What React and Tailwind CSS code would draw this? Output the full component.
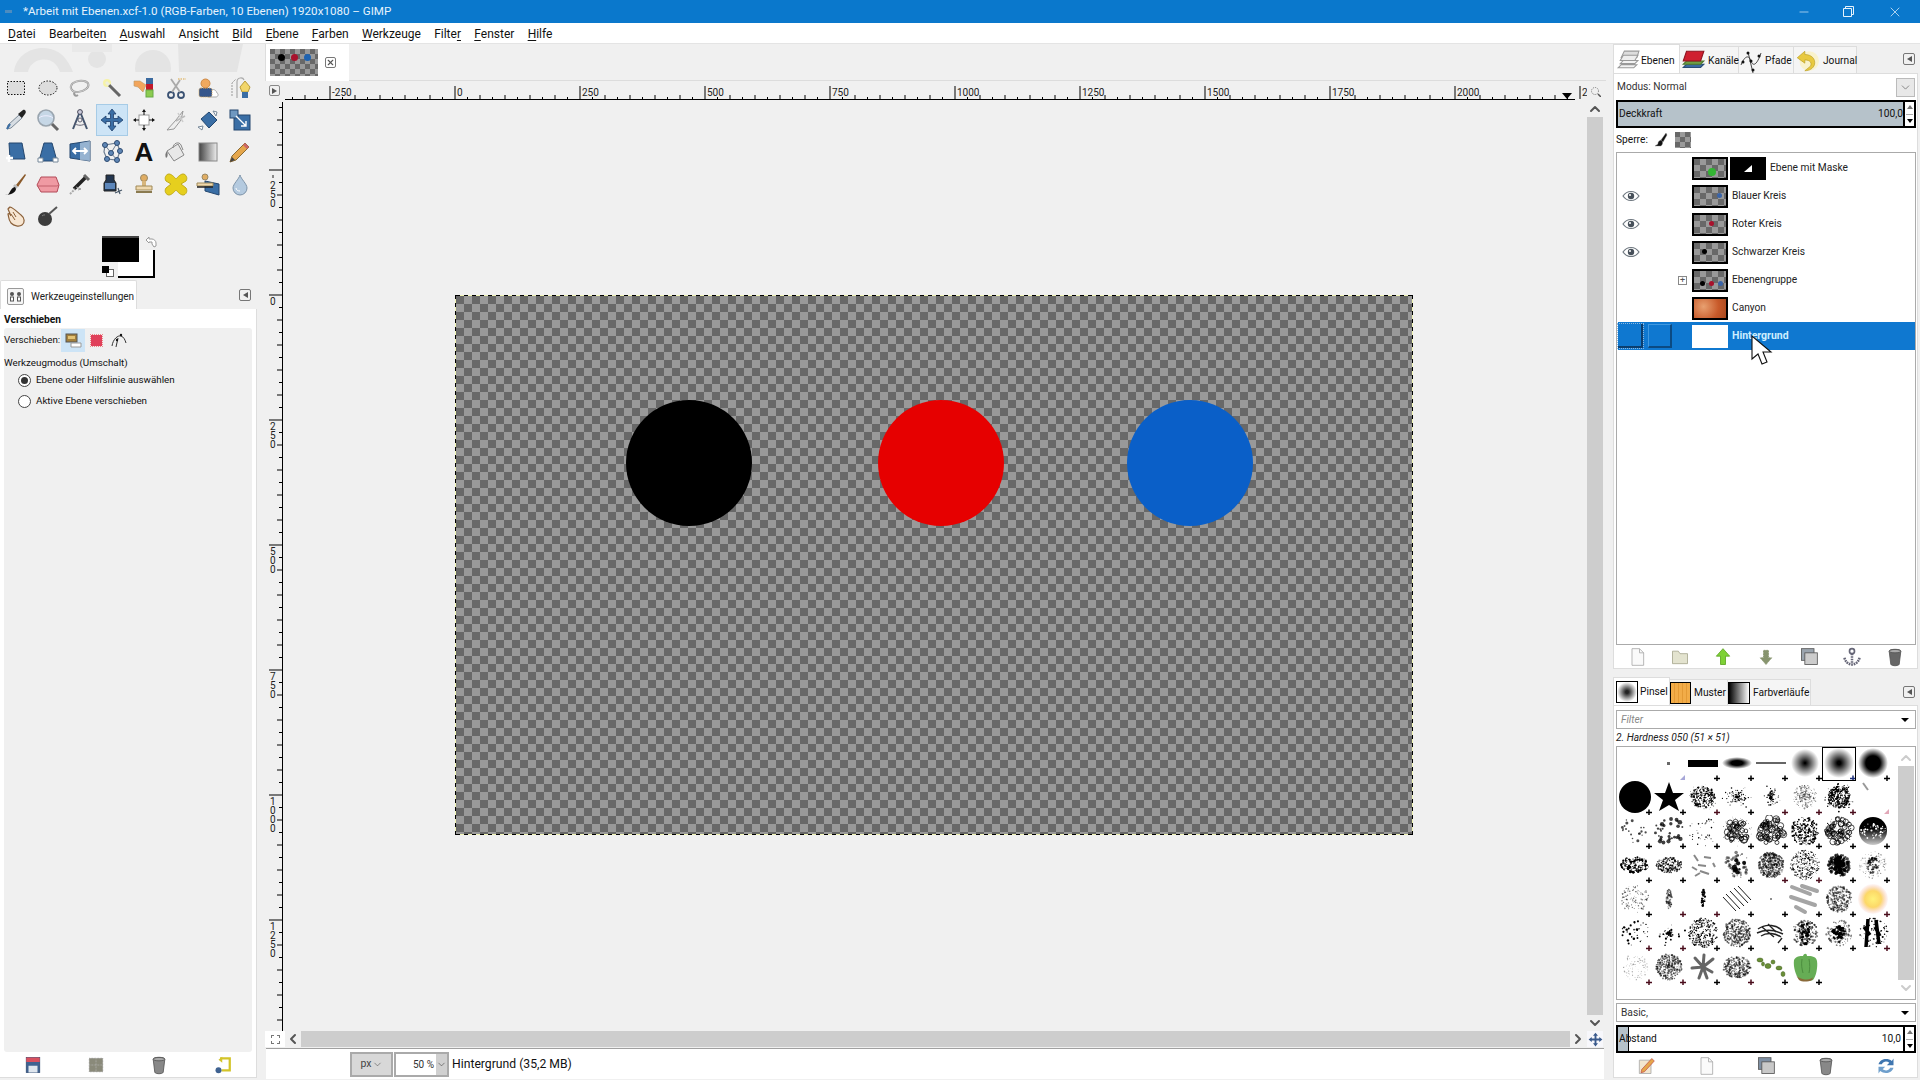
import { Minus, X, ChevronDown, ChevronUp, ChevronLeft, ChevronRight } from "lucide-react";

const menus = [
  ["", "D", "atei"],
  ["Bearbeite", "n", ""],
  ["", "A", "uswahl"],
  ["An", "s", "icht"],
  ["", "B", "ild"],
  ["", "E", "bene"],
  ["", "F", "arben"],
  ["", "W", "erkzeuge"],
  ["Filte", "r", ""],
  ["", "F", "enster"],
  ["", "H", "ilfe"],
];

const checker = "bg-[conic-gradient(#999_25%,#686868_0_50%,#999_0_75%,#686868_0)]";

// tool icons, all in a 24 box
const tools = [
  <><rect x="3.5" y="5.5" width="17" height="13" fill="#ddd" stroke="#111" strokeDasharray="1.5 1.5" /></>,
  <><ellipse cx="12" cy="12" rx="9" ry="7" fill="#ddd" stroke="#111" strokeDasharray="1.5 1.5" /></>,
  <><path d="M3 10c1-4 8-6 13-5s6 5 2 8-11 4-13 2-3-3-2-5zM7 15c-2 3 0 6 3 4" fill="none" stroke="#999" strokeWidth="2" /><path d="M3 10c1-4 8-6 13-5s6 5 2 8-11 4-13 2-3-3-2-5z" fill="none" stroke="#eee" strokeWidth=".6" /></>,
  <><circle cx="7" cy="7" r="4" fill="#f6f3a8" /><path d="M9 9l11 11" stroke="#666" strokeWidth="3" /><path d="M6 6l3 3" stroke="#eed" strokeWidth="3" /></>,
  <><rect x="14" y="2" width="7" height="6" fill="#3b6aa0" /><rect x="14" y="8" width="7" height="6" fill="#c2182a" /><rect x="14" y="14" width="7" height="7" fill="#8ccb50" stroke="#6a4" /><path d="M2 5h6l6 4-3 7-5-5-4-1z" fill="#f2a55c" stroke="#b96" strokeWidth=".6" /></>,
  <><circle cx="7" cy="19" r="3" fill="none" stroke="#3b5273" strokeWidth="1.8" /><circle cx="17" cy="19" r="3" fill="none" stroke="#3b5273" strokeWidth="1.8" /><path d="M8 16L16 4M16 16L7 3" stroke="#aaa" strokeWidth="1.8" /><path d="M14 3h8" stroke="#d9a441" strokeDasharray="1.5 1" /></>,
  <><path d="M13 16c2-4 7-3 8 1 2 1 1 4-1 4H12z" fill="#fff" stroke="#aaa" /><rect x="3" y="12" width="13" height="9" rx="2" fill="#35568c" stroke="#da5" strokeDasharray="1 1" /><circle cx="9.5" cy="7.5" r="4.5" fill="#f0a95e" stroke="#c84" /></>,
  <><path d="M9 22V6c0-5 6-5 7-2" fill="none" stroke="#aaa" strokeWidth="1.2" /><path d="M4 20V7l4-4" fill="none" stroke="#999" strokeWidth="1" strokeDasharray="2 1" /><path d="M14 16l-2-5 5-6 5 6-2 5z" fill="#f2d66a" stroke="#b99b3a" /><rect x="14" y="16" width="6" height="6" fill="#3a6ea5" /></>,
  <><path d="M3 21l1-4 11-10 3 3-11 10z" fill="#d7dde3" stroke="#7a8896" /><path d="M14 6l5-4c2-1 4 2 2 4l-3 4z" fill="#222" /><path d="M3 21l3-5" stroke="#3a6ea5" strokeWidth="2" /></>,
  <><circle cx="10" cy="10" r="8" fill="#c6d7e6" stroke="#9aa5af" strokeWidth="1.6" /><path d="M3 10c3-3 11-3 14 0" fill="none" stroke="#eef" /><path d="M16 16l6 6" stroke="#666" strokeWidth="3" /></>,
  <><circle cx="12" cy="4" r="2.4" fill="#ccd" stroke="#445" /><path d="M11 6L5 21M13 6l6 15" stroke="#44556e" strokeWidth="2" /><path d="M6 15c3 3 9 3 12 0" fill="none" stroke="#667" /><circle cx="12" cy="12" r="2" fill="none" stroke="#667" /></>,
  <><path d="M12 1l4 5h-2.500v4.500H18V8l5 4-5 4v-2.500h-4.500V18H16l-4 5-4-5h2.500v-4.500H6V16l-5-4 5-4v2.500h4.500V6H8z" fill="#3a6ea5" stroke="#1f3f6b" strokeWidth=".8" /></>,
  <><rect x="7" y="7" width="10" height="10" fill="#fff" stroke="#999" /><path d="M12 1l2 3h-4zM12 23l2-3h-4zM1 12l3-2v4zM23 12l-3-2v4z" fill="#111" /><path d="M12 4v3M12 17v3M4 12h3M17 12h3" stroke="#111" /></>,
  <><path d="M3 22l9-10 7-9-2 9-7 9z" fill="#eee" stroke="#999" /><path d="M12 13l9-5" stroke="#bbb" strokeWidth="1.5" /><path d="M14 5l5 9" stroke="#ccc" strokeWidth="1.5" /></>,
  <><path d="M5 11l8-7 8 8-8 8z" fill="#3a6ea5" stroke="#24476f" /><path d="M2 19l5-1-1 4zM17 3l4 1-1 4z" fill="#fff" stroke="#789" /></>,
  <><rect x="6" y="7" width="16" height="15" fill="#3a6ea5" stroke="#24476f" /><rect x="2" y="2" width="8" height="8" fill="#6f98c0" stroke="#24476f" /><path d="M8 8l10 10M18 13v5h-5" stroke="#fff" strokeWidth="1.4" fill="none" /></>,
  <><path d="M5 3h13l3 16H6z" fill="#3a6ea5" stroke="#24476f" /><path d="M2 18h7M5 15v7" stroke="#fff" strokeWidth="2.500" /></>,
  <><path d="M8 3h8l5 18H3z" fill="#3a6ea5" stroke="#24476f" /><path d="M2 18h5v4H2zM17 18h5v4h-5z" fill="#fff" stroke="#789" /></>,
  <><path d="M2 4l20-3v20L2 18z" fill="#3a6ea5" stroke="#24476f" /><path d="M12 3v17l10 1V1z" fill="#d3e1ef" opacity=".6" /><path d="M5 11h14M8 8l-3 3 3 3M16 8l3 3-3 3" stroke="#fff" strokeWidth="1.8" fill="none" /></>,
  <><path d="M5 5l12-2 3 8-3 9-10-1-3-7z" fill="none" stroke="#6e7e92" strokeWidth="1.2" /><path d="M5 5l6 8 6 7M17 3l-6 10" fill="none" stroke="#6e7e92" />{[[5, 5], [17, 3], [20, 11], [17, 20], [7, 19], [11, 13]].map(([x, y]) => <circle key={x + "" + y} cx={x} cy={y} r="2.500" fill="#5f86b5" stroke="#2d4a70" />)}</>,
  <><text x="12" y="21" textAnchor="middle" fontSize="26" fontWeight="700" fontFamily="'Liberation Sans', sans-serif" fill="#111">A</text></>,
  <><path d="M3 11l11-7 6 11-10 6z" fill="#e8e8e8" stroke="#888" /><path d="M9 8c0-5 6-7 8-3l2 5" fill="none" stroke="#888" /><path d="M3 11c-2 2-2 5-1 7 2-1 2-4 1-7z" fill="#777" /></>,
  <><defs><linearGradient id="toolgrad"><stop offset="0" stopColor="#444" /><stop offset="1" stopColor="#eee" /></linearGradient></defs><rect x="3" y="3" width="18" height="18" fill="url(#toolgrad)" stroke="#888" /></>,
  <><path d="M4 16L17 3l4 4L8 20l-6 2z" fill="#e5a64b" stroke="#8a6a33" /><path d="M16 4l4 4" stroke="#c66" strokeWidth="3" /><path d="M2 22l2-5 3 3z" fill="#444" /></>,
  <><path d="M12 13L21 2l1 1-8 12z" fill="#8a5a2b" /><path d="M11 12l3 3-2 2-3-3z" fill="#bbb" /><path d="M1 23c4 0 4-2 6-5 1-2 3-3 4-3l1 2c0 3-5 6-11 6z" fill="#111" /></>,
  <><path d="M5 5h15l3 8-2 7H5l-4-7z" fill="#f09aa3" stroke="#b24a58" /><path d="M1 14h20l2-1" fill="none" stroke="#c2606d" /></>,
  <><path d="M6 17L18 5" stroke="#222" strokeWidth="3.500" /><path d="M16 3l5 5" stroke="#666" strokeWidth="3" /><path d="M8 15l5 2-3 1" stroke="#999" fill="none" /><path d="M2 22l5-5" stroke="#aaa" strokeWidth="2" strokeDasharray="2 1" /></>,
  <><path d="M6 8V3h8v5l2 3v8H4v-8z" fill="#23364f" stroke="#222" /><rect x="5" y="11" width="10" height="6" fill="#5c86ba" /><path d="M15 21l7-3M18 16l2 6" stroke="#456" strokeWidth="1.2" /></>,
  <><circle cx="12" cy="6" r="3.500" fill="#e0ad63" stroke="#986" /><path d="M10 9h4v5h-4z" fill="#d7b67c" /><path d="M4 14h16v4H4z" fill="#f0d9ae" stroke="#a08a58" /><path d="M4 20h16" stroke="#8a7a50" strokeWidth="2" /></>,
  <><path d="M5 2c3 0 7 5 7 5s4-5 7-5 5 4 3 7l-5 3 5 4c2 3 0 7-3 7s-7-5-7-5-4 5-7 5-5-4-3-7l5-4-5-3C0 6 2 2 5 2z" fill="#e6cf1e" stroke="#c1ab18" /></>,
  <><path d="M9 9l14 3v11L9 19z" fill="#3a6ea5" stroke="#24476f" /><circle cx="9" cy="5" r="3" fill="#e0ad63" stroke="#986" /><path d="M1 11h16v3H1z" fill="#f0d9ae" stroke="#a08a58" /><path d="M1 15h16" stroke="#222" strokeWidth="1.5" /></>,
  <><path d="M12 3c1 4 7 9 7 13a7 7 0 0 1-14 0c0-4 6-9 7-13z" fill="#b4cadf" stroke="#7d93a8" /><path d="M8 16c0 2 2 3 4 3" stroke="#fff" fill="none" /></>,
  <><path d="M6 3c4 1 8 6 11 8 4 3 4 8 1 10-3 2-8 1-11-2-3-4-2-6-3-9 1-1 2 0 3 2L4 5c1-2 2-1 2-2z" fill="#f7e6d2" stroke="#8a5f38" strokeWidth="1.200" /><path d="M9 8l3 5M7 10l4 6" stroke="#8a5f38" /></>,
  <><circle cx="9" cy="15" r="7" fill="#3c3c3c" /><path d="M13 10l8-7" stroke="#555" strokeWidth="2" /><path d="M6 12c1-1 2-1 3-1" stroke="#888" /></>,
];

function rng(seed) {
  let x = seed * 7919 + 13;
  return () => {
    x = (x * 16807) % 2147483647;
    return x / 2147483647;
  };
}

function Dots({ seed, n, rx, ry = rx, r = 0.8, fill = "#000", op = 1, gauss = false, ring = false }) {
  const rnd = rng(seed);
  const out = [];
  for (let i = 0; i < n; i++) {
    const a = rnd() * 6.283;
    const d = gauss ? rnd() * rnd() * 1.4 : Math.sqrt(rnd());
    out.push(
      <circle
        key={i}
        cx={17 + Math.cos(a) * d * rx}
        cy={16 + Math.sin(a) * d * ry}
        r={r * (0.3 + rnd() * 0.6)}
        fill={ring ? "none" : fill}
        stroke={ring ? "#000" : "none"}
        strokeWidth={ring ? 0.7 : 0}
        opacity={op}
      />
    );
  }
  return <g>{out}</g>;
}

function Soft({ id, r, core = 10 }) {
  return (
    <>
      <defs>
        <radialGradient id={id}>
          <stop offset={core + "%"} stopColor="#000" />
          <stop offset="100%" stopColor="#000" stopOpacity="0" />
        </radialGradient>
      </defs>
      <circle cx="17" cy="16" r={r} fill={`url(#${id})`} />
    </>
  );
}

// brush list, row by row
const brushes = [
  { none: true, art: null },
  { tri: true, art: <rect x="15" y="15" width="3" height="3" fill="#444" opacity=".8" /> },
  { art: <rect x="2" y="13" width="30" height="7" fill="#000" /> },
  { art: <><defs><radialGradient id="bell"><stop offset="40%" stopColor="#000" /><stop offset="100%" stopColor="#000" stopOpacity="0" /></radialGradient></defs><ellipse cx="17" cy="16" rx="15" ry="6" fill="url(#bell)" /></> },
  { art: <path d="M2 16h30" stroke="#000" strokeWidth="1.200" /> },
  { art: <Soft id="s1" r="14" core={5} /> },
  { art: <Soft id="s2" r="15" core={12} />, selected: true, blue: true },
  { art: <Soft id="s3" r="15" core={48} /> },

  { art: <circle cx="17" cy="16" r="16" fill="#000" /> },
  { art: <polygon points="17,1 21,12 32,12 23,19 27,30 17,24 7,30 11,19 2,12 13,12" fill="#000" /> },
  { art: <><Dots seed={11} n={240} rx={12} ry={11} r={1} /><Dots seed={12} n={40} rx={14} r={0.6} /></>, red: true },
  { art: <Dots seed={13} n={120} rx={13} ry={9} r={0.9} gauss /> },
  { art: <Dots seed={14} n={120} rx={7} ry={13} r={0.9} gauss />, red: true },
  { art: <><Dots seed={15} n={170} rx={12} r={0.8} op={0.5} /><Dots seed={16} n={60} rx={6} r={0.8} op={0.6} /></>, red: true },
  { art: <><Dots seed={17} n={240} rx={11} r={1.1} /><Dots seed={18} n={70} rx={15} r={1} /></>, red: true },
  { none: true, triRed: true, art: <path d="M7 2l5 7" stroke="#999" strokeWidth="2" /> },

  { art: <Dots seed={21} n={20} rx={14} r={1.800} op={0.7} /> },
  { art: <Dots seed={22} n={32} rx={14} r={2.600} op={0.75} /> },
  { art: <Dots seed={23} n={34} rx={15} r={1} /> },
  { art: <><Dots seed={24} n={40} rx={12} r={4} ring /><Dots seed={25} n={60} rx={15} r={0.6} /></> },
  { art: <Dots seed={26} n={55} rx={13} r={4} ring /> },
  { art: <><Dots seed={27} n={240} rx={14} r={1.100} /></> },
  { art: <><Dots seed={28} n={46} rx={13} r={3.500} ring /><Dots seed={29} n={100} rx={14} r={0.7} /></> },
  { art: <><defs><linearGradient id="dk" x2="0" y2="1"><stop offset=".4" stopColor="#000" /><stop offset="1" stopColor="#ccc" /></linearGradient></defs><circle cx="17" cy="16" r="14" fill="url(#dk)" /><Dots seed={30} n={50} rx={13} ry={8} r={1.200} fill="#fff" /></> },

  { art: <><Dots seed={31} n={150} rx={14} ry={8} r={1.600} /><Dots seed={32} n={60} rx={13} ry={7} r={1.200} fill="#fff" /></> },
  { art: <Dots seed={33} n={220} rx={13} ry={8} r={1} op={0.8} /> },
  { art: <g stroke="#888" strokeWidth="2"><path d="M8 6l4 6M18 8l7 1M12 16l8 1M27 14l2 4M6 18l5 3M14 22l9 3M9 27l5-3" /></g> },
  { art: <><Dots seed={34} n={50} rx={13} r={2} op={0.5} /><Dots seed={35} n={10} rx={8} r={3} op={0.9} /></> },
  { art: <Dots seed={36} n={420} rx={13} r={1.200} op={0.55} />, red: true },
  { art: <Dots seed={37} n={300} rx={15} r={0.8} />, red: true },
  { art: <><Dots seed={38} n={180} rx={11} r={1.800} op={0.7} /><Dots seed={39} n={40} rx={5} ry={8} r={2.500} /></> },
  { art: <><Dots seed={40} n={120} rx={14} r={0.8} op={0.4} /><Dots seed={41} n={50} rx={6} ry={9} r={1.500} op={0.7} /></> },

  { art: <Dots seed={42} n={110} rx={14} r={0.9} op={0.55} /> },
  { red: true, art: <Dots seed={43} n={70} rx={3} ry={10} r={1.200} op={0.5} /> },
  { red: true, art: <Dots seed={44} n={30} rx={2} ry={10} r={1.400} /> },
  { art: <g stroke="#000" strokeWidth=".9"><path d="M10 8l14 15M6 11l14 15M14 5l14 15M3 14l13 14M18 3l13 14" /></g> },
  { art: <circle cx="17" cy="16" r=".8" fill="#000" /> },
  { art: <g stroke="#888" strokeWidth="4" strokeLinecap="round" opacity=".75"><path d="M4 4l18 7M3 14l24 8M8 24l9 5M14 3l15 5" /></g> },
  { art: <><Dots seed={45} n={260} rx={13} r={1.200} op={0.55} /></> },
  { red: true, art: <><defs><radialGradient id="sun"><stop offset="0%" stopColor="#fff27a" /><stop offset="55%" stopColor="#fcd868" /><stop offset="100%" stopColor="#f6b9b0" stopOpacity=".1" /></radialGradient></defs><circle cx="17" cy="16" r="15" fill="url(#sun)" /></> },

  { red: true, art: <Dots seed={46} n={34} rx={14} r={1.400} /> },
  { red: true, art: <Dots seed={47} n={60} rx={14} ry={10} r={1.200} gauss /> },
  { art: <Dots seed={48} n={300} rx={15} r={0.9} /> },
  { art: <Dots seed={49} n={340} rx={14} r={1.100} op={0.6} /> },
  { art: <g stroke="#222" strokeWidth="1.400"><path d="M4 12c8-6 20-4 24 2M3 16c8-4 18-3 26 1M7 19c6-4 14-3 20 1M24 26l4-5" fill="none" /><path d="M8 10l12 10M14 7l8 8" /></g> },
  { art: <><Dots seed={50} n={160} rx={13} r={1.300} op={0.6} /><Dots seed={51} n={40} rx={6} ry={12} r={1.700} /></> },
  { art: <><Dots seed={52} n={120} rx={13} r={1.300} op={0.5} /><Dots seed={53} n={50} rx={7} r={2} /></> },
  { red: true, art: <g><Dots seed={54} n={70} rx={15} r={1} /><path d="M12 2l-2 28M20 3l3 24M8 10l6 8M19 10l5 9" stroke="#000" strokeWidth="3.500" /></g> },

  { red: true, art: <Dots seed={55} n={90} rx={13} r={0.8} op={0.35} /> },
  { red: true, art: <Dots seed={56} n={360} rx={13} r={1.100} op={0.55} /> },
  { art: <g stroke="#333" strokeWidth="3" strokeLinecap="round" opacity=".75"><path d="M17 16l-8-9M17 16l10-8M17 16l9 5M17 16l-4 11M17 16l-11 1M17 16l4 11M17 16l1-12" /></g> },
  { red: true, art: <Dots seed={57} n={340} rx={14} ry={11} r={1.100} op={0.55} /> },
  { art: <g fill="#6a8f37" stroke="#3f5d1e" strokeWidth=".5"><ellipse cx="6" cy="9" rx="3" ry="2" /><ellipse cx="14" cy="15" rx="3" ry="2.500" /><ellipse cx="19" cy="11" rx="2" ry="2" /><ellipse cx="25" cy="17" rx="3" ry="2" /><ellipse cx="29" cy="23" rx="2" ry="2.500" /><ellipse cx="9" cy="13" rx="1.500" ry="2" /></g> },
  {
    art: (
      <>
        <path d="M6 9c2-4 6-4 9-4 1-3 4-3 4 0 4 0 9 0 10 5 1 6-1 16-4 19-2 1-4 1-6 0-3 1-6 0-8-1-3-3-6-12-5-19z" fill="#66ad55" />
        <path d="M8 24c3 5 15 6 17 2l-1 3c-4 2-10 2-13 0z" fill="#8a6a3a" />
        <path d="M14 8c-1 6 0 10 1 14M21 8c1 5 1 10 0 14" stroke="#4c8d3e" fill="none" />
      </>
    ),
  },
];

function BrushCell({ b }) {
  return (
    <div className={b.selected ? "relative h-[34px] w-[34px] outline-[1.5px] -outline-offset-1 outline-black" : "relative h-[34px] w-[34px]"}>
      <svg width="34" height="34" viewBox="0 0 34 34" className="block overflow-hidden">
        {b.art}
        {b.tri && <path d="M33 28v5h-5z" fill="#a7a7d8" />}
        {b.triRed && <path d="M33 28v5h-5z" fill="#e2a8b8" />}
        {!b.none && !b.tri && <path d="M31 28.500v6M28 31.500h6" stroke={b.red ? "#4a0d1c" : b.blue ? "#1d2f7a" : "#000"} strokeWidth="1.500" />}
      </svg>
    </div>
  );
}

function Thumb({ bg = checker, dots = [], className = "" }) {
  return (
    <div className={`relative h-[23px] w-[36px] border-2 border-black bg-[length:12px_12px] ${bg} ${className}`}>
      {dots.map(([x, y, c]) => (
        <span key={x + c} className={`absolute h-[5px] w-[5px] rounded-full ${c}`} style={{ left: x, top: y }} />
      ))}
    </div>
  );
}

function Eye() {
  return (
    <svg width="18" height="12" viewBox="0 0 18 12">
      <path d="M1 6c4-6 12-6 16 0-4 6-12 6-16 0z" fill="#fff" stroke="#6f7880" strokeWidth="1.200" />
      <circle cx="9" cy="6" r="3.200" fill="#47505a" />
      <circle cx="8" cy="5" r="1" fill="#fff" />
    </svg>
  );
}

const layers = [
  { name: "Blauer Kreis", eye: true, dots: [[23, 6, "bg-[#3a64a8]"]] },
  { name: "Roter Kreis", eye: true, dots: [[15, 6, "bg-[#a8112c]"]] },
  { name: "Schwarzer Kreis", eye: true, dots: [[8, 6, "bg-black"]] },
  { name: "Ebenengruppe", group: true, dots: [[6, 10, "bg-black"], [15, 10, "bg-[#a8112c]"], [24, 10, "bg-[#3a64a8]"]] },
];

function CollapseBtn() {
  return (
    <div className="flex h-[12px] w-[12px] items-center justify-center rounded-[2px] border border-[#777]">
      <span className="h-0 w-0 border-y-[3px] border-r-[5px] border-y-transparent border-r-[#555]" />
    </div>
  );
}

function Spin() {
  return (
    <div className="flex h-full w-[11px] flex-col items-center justify-between border-y-2 border-r-2 border-black bg-white py-[3px]">
      <span className="h-0 w-0 border-x-[3px] border-b-[4px] border-x-transparent border-b-[#777]" />
      <span className="h-px w-[7px] bg-[#aaa]" />
      <span className="h-0 w-0 border-x-[3px] border-t-[4px] border-x-transparent border-t-black" />
    </div>
  );
}

function I({ children, size = 20, box = 24 }) {
  return (
    <svg width={size} height={size} viewBox={`0 0 ${box} ${box}`} className="shrink-0 overflow-visible">
      {children}
    </svg>
  );
}

const PageIcon = () => <I><path d="M6 2h9l5 5v15H6z" fill="#fafafa" stroke="#aaa" /><path d="M15 2v5h5" fill="none" stroke="#aaa" /></I>;
const TrashIcon = ({ dither }) => (
  <I>
    <path d="M5 5c0-3 14-3 14 0l-2 16c-2 2-8 2-10 0z" fill={dither ? "#888" : "#666"} stroke="#555" />
    <ellipse cx="12" cy="5" rx="7" ry="2" fill="#aaa" stroke="#555" />
  </I>
);

function Ruler() {
  const ticks = [];
  for (let i = -13; i < 91; i++) {
    const x = 170 + 12.5 * i;
    const h = i % 10 === 0 ? 13 : i % 2 === 0 ? 4 : 2;
    ticks.push(<path key={i} d={`M${x} 18v-${h}`} stroke="#000" />);
  }
  const labels = [-250, 0, 250, 500, 750, 1000, 1250, 1500, 1750, 2000];
  return (
    <svg width="1302" height="20" className="block">
      <path d="M0 18.500h1290" stroke="#000" />
      {ticks}
      {labels.map((v) => (
        <text key={v} x={170 + v / 2 + 2} y="15" fontSize="10" fill="#222">
          {v}
        </text>
      ))}
      {/* the last label is cut by the end of the ruler */}
      <text x="1297" y="15" fontSize="10" fill="#222">2</text>
      <path d="M1277 12h10l-5 6z" fill="#000" />
    </svg>
  );
}

function VRuler() {
  const ticks = [];
  for (let j = -15; j < 59; j++) {
    const y = 194 + 12.5 * j;
    const w = j % 10 === 0 ? 13 : j % 2 === 0 ? 5 : 3;
    ticks.push(<path key={j} d={`M17 ${y}h-${w}`} stroke="#000" />);
  }
  const labels = [-250, 0, 250, 500, 750, 1000, 1250];
  return (
    <svg width="20" height="930" className="block">
      <path d="M17.500 1v929" stroke="#000" />
      {ticks}
      {labels.map((v) => {
        const chars = String(Math.abs(v)).split("");
        const y0 = 194 + v / 2;
        return (
          <g key={v} fontSize="10" fill="#222">
            {v < 0 && <path d={`M8 ${y0 + 5}v3`} stroke="#222" />}
            {chars.map((c, i) => (
              <text key={i} x="5" y={y0 + (v < 0 ? 19 : 10) + i * 9}>
                {c}
              </text>
            ))}
          </g>
        );
      })}
    </svg>
  );
}

export default function App() {
  return (
    <div className="flex h-[1080px] w-[1920px] flex-col overflow-hidden bg-[#f0f0f0] font-['Roboto',sans-serif] text-[#111]">
      {/* title bar */}
      <div className="flex h-[23px] shrink-0 items-center bg-[#0a78cc] pl-[5px] text-[11.6px] text-[#e6f3fc]">
        <span className="mr-[11px] h-[3px] w-[7px] bg-[#4c8cc0]" />
        <span>*Arbeit mit Ebenen.xcf-1.0 (RGB-Farben, 10 Ebenen) 1920x1080 – GIMP</span>
        <div className="ml-auto flex items-center">
          <Minus className="mr-[32px] h-[14px] w-[14px] text-white" strokeWidth={1} />
          <svg width="11" height="11" viewBox="0 0 11 11" className="mr-[33px]">
            <path d="M.5 2.500h8v8h-8zM2.500 2.500v-2h8v8h-2" fill="none" stroke="#e6f3fc" />
          </svg>
          <X className="mr-[17px] h-[16px] w-[16px] text-white" strokeWidth={1} />
        </div>
      </div>

      {/* menu */}
      <div className="flex h-[21px] shrink-0 items-center gap-[13.3px] border-b border-[#e4e4e4] bg-white pl-2 pt-px text-[12px]">
        {menus.map(([a, u, b]) => (
          <span key={a + u + b}>
            {a}
            <u className="underline-offset-2">{u}</u>
            {b}
          </span>
        ))}
      </div>

      <div className="flex min-h-0 flex-1">
        {/* toolbox */}
        <aside className="flex w-[262px] shrink-0 flex-col">
          <div className="h-[28px] overflow-hidden">
            <svg width="262" height="28" viewBox="0 0 262 28">
              <path d="M14 28c2-20 26-30 44-20 6 3 12 12 15 20H60c-3-9-10-14-20-12-6 1-11 6-12 12z" fill="#e4e4e4" />
              <circle cx="97" cy="15" r="9" fill="#e4e4e4" />
              <path d="M72 0h40v8H72z" fill="#e9e9e9" />
              <circle cx="153" cy="24" r="18" fill="#e4e4e4" />
              <path d="M178 0h65l-6 28h-58z" fill="#e4e4e4" />
            </svg>
          </div>
          <div className="grid h-[160px] grid-cols-[repeat(8,32px)] auto-rows-[32px]">
            {tools.map((t, i) => (
              <div key={i} className={i === 11 ? "flex items-center justify-center border border-[#a6cbe6] bg-[#cde4f6]" : "flex items-center justify-center"}>
                <I size={24}>{t}</I>
              </div>
            ))}
          </div>
          <div className="h-[48px] shrink-0 pl-[102px] pt-[4px]">
            <div className="relative h-[42px] w-[54px]">
              <div className="absolute left-[16px] top-[14px] h-[28px] w-[37px] border-b-2 border-r-2 border-black bg-white" />
              <div className="absolute left-0 top-0 h-[26px] w-[37px] border-t-2 border-[#444] bg-black" />
              <div className="absolute left-[4px] top-[33px] h-[8px] w-[8px] border border-[#666] bg-white" />
              <div className="absolute left-0 top-[30px] h-[7px] w-[7px] bg-black" />
              <svg width="12" height="12" viewBox="0 0 12 12" className="absolute left-[43px] top-0">
                <path d="M1 4l3-3v2h3c2 0 4 2 4 4v3l-2 1-2-3V6H4v1z" fill="#fff" stroke="#999" />
              </svg>
            </div>
          </div>
          <div className="flex h-[29px] shrink-0 items-center justify-between pr-[11px]">
            <div className="flex h-full w-[137px] items-center gap-[7px] rounded-t-[2px] border-x border-t border-[#ddd] bg-white pl-[6px] pt-[2px] text-[10px] text-[#222]">
              <span className="flex h-[17px] w-[17px] items-center justify-center rounded-[2px] border border-[#999] bg-[#f5f5f5]">
                <svg width="13" height="11" viewBox="0 0 13 11">
                  <rect x="1" y="1" width="4" height="4" rx="2" fill="#555" />
                  <rect x="1.500" y="6" width="3" height="4" fill="#fff" stroke="#555" />
                  <rect x="8" y="1" width="4" height="4" rx="2" fill="#555" />
                  <rect x="8.500" y="6" width="3" height="4" fill="#fff" stroke="#555" />
                </svg>
              </span>
              Werkzeugeinstellungen
            </div>
            <CollapseBtn />
          </div>
          <div className="mb-[2px] mr-[5px] flex min-h-0 flex-1 flex-col border-b border-r border-[#ddd] bg-white text-[9.8px]">
            <div className="flex h-[19px] shrink-0 items-center pl-[4px] pt-[2px] text-[10.2px] font-bold">Verschieben</div>
            <div className="mx-[4px] min-h-0 flex-1 rounded-[3px] bg-[#f0f0f0]">
              <div className="flex h-[24px] items-center">
                <span className="w-[57px]">Verschieben:</span>
                <span className="flex h-[23px] w-[24px] items-center justify-center bg-[#cde4f6]">
                  <svg width="17" height="15" viewBox="0 0 17 15">
                    <rect x="1" y="1" width="11" height="8" fill="#a3803c" stroke="#555" />
                    <rect x="3" y="3" width="7" height="3" fill="#e2c275" />
                    <path d="M6 10h10v4H6z" fill="#fff" stroke="#999" />
                  </svg>
                </span>
                <span className="flex h-[23px] w-[22px] items-center justify-center">
                  <span className="h-[11px] w-[11px] bg-[#e0405a] outline-1 outline-dotted outline-[#e88]" />
                </span>
                <span className="flex h-[23px] w-[24px] items-center justify-center">
                  <svg width="16" height="15" viewBox="0 0 16 15">
                    <path d="M1 13c1-7 6-11 9-10s4 4 5 7M5 14l2-9" fill="none" stroke="#333" />
                    <circle cx="10" cy="2" r="1.200" fill="#111" />
                    <circle cx="6" cy="7" r="1.200" fill="#111" />
                  </svg>
                </span>
              </div>
              <div className="mt-[4px] flex h-[14px] items-center">Werkzeugmodus (Umschalt)</div>
              <div className="flex h-[21px] items-center gap-[5px] pl-[14px]">
                <span className="flex h-[13px] w-[13px] items-center justify-center rounded-full border border-[#444] bg-white">
                  <span className="h-[7px] w-[7px] rounded-full bg-[#333]" />
                </span>
                Ebene oder Hilfslinie auswählen
              </div>
              <div className="flex h-[21px] items-center gap-[5px] pl-[14px]">
                <span className="h-[13px] w-[13px] rounded-full border border-[#444] bg-white" />
                Aktive Ebene verschieben
              </div>
            </div>
            <div className="flex h-[25px] shrink-0 items-center justify-between px-[24px]">
              <I size={18}><rect x="3" y="2" width="18" height="20" fill="#3f6291" stroke="#2b466e" /><rect x="3" y="2" width="18" height="6" fill="#d8505f" /><rect x="6" y="13" width="12" height="9" fill="#dfe6ee" /></I>
              <I size={18}><rect x="3" y="3" width="18" height="18" fill="#8a8a7a" stroke="#888" strokeDasharray="1 1" /><path d="M3 12h18M12 3v18" stroke="#bbb" strokeDasharray="1 1" /></I>
              <TrashIcon dither />
              <I size={18}><path d="M8 3h13v16H10" fill="none" stroke="#d3c428" strokeWidth="3" /><path d="M11 1L6 5l5 4z" fill="#d3c428" /><circle cx="6" cy="19" r="4" fill="#3f6291" /></I>
            </div>
          </div>
        </aside>

        {/* image window */}
        <main className="flex w-[1344px] shrink-0 flex-col pl-[3px]">
          <div className="flex h-[37px] shrink-0 border-b border-[#dcdcdc]">
            <div className="flex h-[37px] w-[84px] items-center gap-[7px] border-l border-[#ddd] bg-white pl-[4px]">
              <div className={`relative h-[27px] w-[48px] bg-[length:10px_10px] ${checker}`}>
                <span className="absolute left-[8px] top-[5px] h-[7px] w-[7px] rounded-full bg-black" />
                <span className="absolute left-[21px] top-[5px] h-[7px] w-[7px] rounded-full bg-[#a8112c]" />
                <span className="absolute left-[34px] top-[5px] h-[7px] w-[7px] rounded-full bg-[#1f63b0]" />
              </div>
              <span className="flex h-[11px] w-[11px] items-center justify-center rounded-[2px] border border-[#777]">
                <X className="h-[9px] w-[9px] text-[#555]" strokeWidth={3} />
              </span>
            </div>
          </div>
          <div className="flex h-[20px] shrink-0">
            <div className="w-[20px] pl-[4px] pt-[4px]">
              <span className="flex h-[11px] w-[11px] items-center justify-center rounded-[2px] border border-[#888]">
                <span className="h-0 w-0 border-y-[3px] border-l-[5px] border-y-transparent border-l-[#555]" />
              </span>
            </div>
            <Ruler />
            <div className="flex w-[16px] items-center justify-center">
              <svg width="11" height="11" viewBox="0 0 11 11">
                <circle cx="5" cy="5" r="3.500" fill="none" stroke="#777" strokeDasharray="1 1" />
                <path d="M8 8l3 3" stroke="#555" strokeWidth="1.500" />
              </svg>
            </div>
          </div>
          <div className="flex h-[930px] shrink-0">
            <VRuler />
            <div className="w-[1302px] shrink-0 pl-[170px] pt-[194px]">
              {/* marching ants: side strips from the outer gradient, top and bottom from the inner one */}
              <div className="h-[540px] w-[958px] bg-[repeating-linear-gradient(180deg,#000_0_4px,#f1f5b5_4px_8px)] px-px">
                <div className="h-full w-full bg-[repeating-linear-gradient(90deg,#000_0_4px,#f1f5b5_4px_8px)] py-px">
                  <div className={`relative h-full w-full bg-[length:16px_16px] ${checker}`}>
                    <span className="absolute left-[170px] top-[104px] h-[126px] w-[126px] rounded-full bg-black" />
                    <span className="absolute left-[422px] top-[104px] h-[126px] w-[126px] rounded-full bg-[#e60000]" />
                    <span className="absolute left-[671px] top-[104px] h-[126px] w-[126px] rounded-full bg-[#0a5fc8]" />
                  </div>
                </div>
              </div>
            </div>
            <div className="flex w-[16px] flex-col items-center">
              <ChevronUp className="h-[16px] w-[16px] shrink-0 text-[#555]" strokeWidth={3} />
              <div className="w-full flex-1 bg-[#cdcdcd]" />
              <ChevronDown className="h-[16px] w-[16px] shrink-0 text-[#555]" strokeWidth={3} />
            </div>
          </div>
          <div className="flex h-[17px] shrink-0 items-center pb-[1px]">
            <div className="flex h-[16px] w-[20px] items-center justify-center bg-white">
              <span className="h-[9px] w-[9px] border border-dashed border-[#777]" />
            </div>
            <ChevronLeft className="h-[16px] w-[16px] shrink-0 text-[#555]" strokeWidth={3} />
            <div className="h-[16px] w-[1269px] bg-[#cdcdcd]" />
            <ChevronRight className="h-[16px] w-[16px] shrink-0 text-[#555]" strokeWidth={3} />
            <div className="ml-[1px] flex h-[16px] w-[16px] items-center justify-center bg-[#f7f7fb]">
              <I size={15}><path d="M12 1l4 5h-2.500v4.500H18V8l5 4-5 4v-2.500h-4.500V18H16l-4 5-4-5h2.500v-4.500H6V16l-5-4 5-4v2.500h4.500V6H8z" fill="#3a5a8c" /></I>
            </div>
          </div>
          <div className="mb-[1px] ml-[1px] mr-[2px] flex min-h-0 flex-1 items-center border-t border-[#a0a0a0] bg-white pl-[84px] text-[12.2px]">
            <div className="flex h-[25px] w-[43px] items-center justify-center border-2 border-[#aaa] bg-[#d8d8d8] text-[10.5px] text-[#444]">
              px
              <ChevronDown className="h-[11px] w-[11px]" strokeWidth={1.200} />
            </div>
            <div className="ml-px flex h-[25px] w-[55px] items-center justify-between border-2 border-[#aaa] bg-white pl-[17px] text-[10px] text-[#333]">
              50 %
              <span className="flex h-full w-[11px] items-center justify-center bg-[#d0d0d0]">
                <ChevronDown className="h-[11px] w-[11px]" strokeWidth={1.200} />
              </span>
            </div>
            <span className="ml-[3px]">Hintergrund (35,2 MB)</span>
          </div>
        </main>

        {/* docks */}
        <aside className="flex w-[314px] shrink-0 flex-col pl-[7px] pr-[2px] text-[10.2px]">
          <div className="flex h-[29px] shrink-0 items-end">
            <div className="flex h-[29px] w-[67px] items-center gap-[1px] border-x border-t border-[#ddd] bg-white pl-[1px] pt-[3px]">
              <I size={25}><path d="M5 15h14l3-3H8zM3 19h15l3-3H6z" fill="#f2f2f2" stroke="#999" /><path d="M6 9h15l2-6H9z" fill="#ddd" stroke="#999" /><path d="M5 12h14l3-5H8z" fill="#eee" stroke="#999" /></I>
              Ebenen
            </div>
            <div className="flex h-[27px] w-[59px] items-center gap-[2px] border-r border-t border-[#ddd] bg-[#f5f5f5] pt-[2px]">
              <I size={26}><path d="M3 18h16l3-3H6z" fill="#3b6aa0" stroke="#2b4c75" /><path d="M3 15h16l3-3H6z" fill="#6fa046" stroke="#4f7a31" /><path d="M3 12l3-9h16l-3 9z" fill="#cf1f2f" stroke="#8e1420" /></I>
              Kanäle
            </div>
            <div className="flex h-[27px] w-[55px] items-center gap-[2px] border-r border-t border-[#ddd] bg-[#f5f5f5] pt-[2px]">
              <I size={24}><path d="M2 16C6 6 10 6 12 12s6 4 10-8M9 3l5 21" fill="none" stroke="#333" strokeWidth=".9" />{[[9, 4], [12, 12], [20, 7], [4, 13], [14, 21]].map(([x, y]) => <circle key={x} cx={x} cy={y} r="1.500" fill="#111" />)}</I>
              Pfade
            </div>
            <div className="flex h-[27px] w-[63px] items-center gap-[3px] border-r border-t border-[#ddd] bg-[#f5f5f5] pt-[2px]">
              <I size={26}><circle cx="14" cy="12" r="9" fill="#f9f2cc" /><path d="M3 9l7-6v3c6 0 10 4 9 9-1 4-5 6-9 6l5-4c2-3 0-6-5-6v3z" fill="#e8c93f" stroke="#b89c22" strokeWidth=".6" /></I>
              Journal
            </div>
            <div className="mb-[8px] ml-auto mr-[3px]"><CollapseBtn /></div>
          </div>

          <div className="flex h-[596px] shrink-0 flex-col border border-[#ddd] bg-white pl-[2px] pr-[1px]">
            <div className="flex h-[26px] shrink-0 items-center justify-between pr-[1px] text-[#333]">
              <span className="pl-[1px]">Modus: Normal</span>
              <span className="flex h-[19px] w-[19px] items-center justify-center border border-[#bbb] bg-[#e8e8e8]">
                <ChevronDown className="h-[13px] w-[13px] text-[#555]" strokeWidth={1.200} />
              </span>
            </div>
            <div className="flex h-[28px] shrink-0">
              <div className="flex h-full w-[289px] items-center justify-between border-2 border-black bg-[#b6c2ca] pl-[1px]">
                Deckkraft
                <span>100,0</span>
              </div>
              <Spin />
            </div>
            <div className="flex h-[24px] shrink-0 items-center">
              <span className="w-[36px]">Sperre:</span>
              <svg width="16" height="16" viewBox="0 0 16 16">
                <path d="M14 1l-5 7 2 2 4-7zM9 8c-3 1-3 3-3 4l-3 2h6c2-2 2-4 1-5z" fill="#111" stroke="#888" strokeWidth=".4" />
              </svg>
              <div className={`ml-[7px] h-[16px] w-[16px] bg-[length:10px_10px] ${checker}`} />
            </div>
            <div className="relative min-h-0 flex-1 border border-[#aaa] pl-px pt-[1px]">
              <div className="grid h-[28px] grid-cols-[26px_28px_20px_auto] items-center">
                <span />
                <span />
                <span />
                <div className="flex items-center gap-[2px]">
                  <Thumb dots={[[14, 9, "bg-[#33b533] h-[8px] w-[8px]"]]} />
                  <div className="flex h-[23px] w-[36px] items-center justify-center bg-black">
                    <svg width="10" height="9" viewBox="0 0 10 9"><path d="M1 8L9 1v7z" fill="#fff" /></svg>
                  </div>
                  <span className="ml-[2px] text-[#222]">Ebene mit Maske</span>
                </div>
              </div>
              {layers.map((l) => (
                <div key={l.name} className="grid h-[28px] grid-cols-[26px_28px_20px_auto] items-center">
                  <span className="flex justify-center">{l.eye && <Eye />}</span>
                  <span />
                  <span className="flex justify-end pr-[5px]">
                    {l.group && (
                      <span className="flex h-[9px] w-[9px] items-center justify-center border border-[#888] text-[9px] leading-none text-[#555]">+</span>
                    )}
                  </span>
                  <div className="flex items-center gap-[4px]">
                    <Thumb dots={l.dots} />
                    <span className="text-[#222]">{l.name}</span>
                  </div>
                </div>
              ))}
              <div className="grid h-[28px] grid-cols-[26px_28px_20px_auto] items-center">
                <span />
                <span />
                <span />
                <div className="flex items-center gap-[4px]">
                  <div className="h-[23px] w-[36px] border-2 border-black bg-[radial-gradient(circle_at_30%_40%,#e8a070,#c85a2a_60%,#a8481e)]" />
                  <span className="text-[#222]">Canyon</span>
                </div>
              </div>
              <div className="relative grid h-[28px] grid-cols-[26px_28px_20px_auto] items-center bg-[#0f78d0]">
                <span className="h-[24px] w-[25px] border-b-2 border-r-2 border-[#0b3e6e] outline-1 outline-dotted outline-[#8fb8dc]" />
                <span className="ml-[4px] h-[24px] w-[24px] border-b-2 border-r-2 border-[#0b4a82] border-t border-l border-t-[#3f98e0] border-l-[#3f98e0]" />
                <span />
                <div className="flex items-center gap-[4px]">
                  <div className="h-[23px] w-[36px] bg-white" />
                  <span className="text-[10.5px] font-bold text-[#cdeeff]">Hintergrund</span>
                </div>
                <svg width="22" height="32" viewBox="0 0 22 32" className="absolute left-[133px] top-[13px]">
                  <path d="M1 1v23l6-5 4 10 5-2-4-10h8z" fill="#fff" stroke="#111" strokeWidth="1.100" />
                </svg>
              </div>
            </div>
            <div className="flex h-[23px] shrink-0 items-center justify-between px-[11px]">
              <PageIcon />
              <I><path d="M3 5h7l2 3h9v12H3z" fill="#e3e3cf" stroke="#a6a68e" /></I>
              <I><path d="M12 2l8 9h-5v10H9V11H4z" fill="#7ed136" stroke="#5da322" /></I>
              <I><path d="M12 21l-7-8h4V4h6v9h4z" fill="#88956f" stroke="#88956f" strokeDasharray="2 1" /></I>
              <I><rect x="3" y="2" width="15" height="14" fill="#9aa4ae" stroke="#555" /><rect x="7" y="7" width="15" height="14" fill="#ccc" stroke="#555" /></I>
              <I><circle cx="12" cy="5" r="3" fill="none" stroke="#667" strokeWidth="2" /><path d="M12 8v12M3 13c1 5 5 8 9 8s8-3 9-8" fill="none" stroke="#667" strokeWidth="3" strokeDasharray="2 1" /></I>
              <TrashIcon />
            </div>
          </div>

          <div className="mt-[8px] flex h-[28px] shrink-0 items-end">
            <div className="flex h-[28px] w-[57px] items-center gap-[2px] border-x border-t border-[#ddd] bg-white pl-[2px]">
              <span className="flex h-[22px] w-[22px] shrink-0 items-center justify-center border border-black bg-[radial-gradient(circle,#222_10%,#fff_70%)]" />
              Pinsel
            </div>
            <div className="flex h-[26px] w-[58px] items-center gap-[3px] border-r border-t border-[#ddd] bg-[#f5f5f5]">
              <span className="h-[22px] w-[21px] shrink-0 border border-black bg-[repeating-linear-gradient(90deg,#f2ac48_0_3px,#e49a35_3px_4px)]" />
              Muster
            </div>
            <div className="flex h-[26px] w-[83px] items-center gap-[3px] border-r border-t border-[#ddd] bg-[#f5f5f5]">
              <span className="h-[22px] w-[22px] shrink-0 border border-black bg-[linear-gradient(90deg,#000,#fff)]" />
              Farbverläufe
            </div>
            <div className="mb-[7px] ml-auto mr-[3px]"><CollapseBtn /></div>
          </div>

          <div className="mb-[2px] flex min-h-0 flex-1 flex-col border border-[#ddd] bg-white pl-[2px] pr-[1px] pt-[4px]">
            <div className="flex h-[19px] shrink-0 items-center justify-between border border-[#aaa] px-[4px] text-[#888]">
              <em>Filter</em>
              <span className="mr-[2px] h-0 w-0 border-x-[4px] border-t-[4px] border-x-transparent border-t-black" />
            </div>
            <div className="flex h-[17px] shrink-0 items-center italic text-[#222]">2. Hardness 050 (51 × 51)</div>
            <div className="flex h-[254px] shrink-0 border border-[#aaa]">
              <div className="ml-px grid w-[272px] grid-cols-[repeat(8,34px)] auto-rows-[34px] content-start">
                {brushes.map((b, i) => (
                  <BrushCell key={i} b={b} />
                ))}
              </div>
              <div className="ml-[8px] flex w-[16px] flex-col items-center">
                <ChevronUp className="mt-[3px] h-[16px] w-[16px] shrink-0 text-[#ccc]" strokeWidth={3} />
                <div className="w-full flex-1 bg-[#cdcdcd]" />
                <ChevronDown className="mb-[3px] h-[16px] w-[16px] shrink-0 text-[#ccc]" strokeWidth={3} />
              </div>
            </div>
            <div className="mt-[3px] flex h-[19px] shrink-0 items-center justify-between border border-[#aaa] px-[4px] text-[#333]">
              Basic,
              <span className="mr-[2px] h-0 w-0 border-x-[4px] border-t-[4px] border-x-transparent border-t-black" />
            </div>
            <div className="mt-[3px] flex h-[28px] shrink-0">
              <div className="relative flex h-full w-[289px] items-center justify-between border-2 border-black bg-white pl-[1px] pr-[2px]">
                <span className="absolute left-0 top-0 h-full w-[11px] border-r border-black bg-[#b6c2ca]" />
                <span className="relative">Abstand</span>
                <span>10,0</span>
              </div>
              <Spin />
            </div>
            <div className="flex h-[25px] shrink-0 items-center justify-between px-[20px]">
              <I><path d="M4 5h14v16H4z" fill="#f2e6d0" stroke="#aaa" /><path d="M7 16L19 3l3 3L10 19l-4 1z" fill="#e5a64b" stroke="#b44" strokeWidth=".8" /></I>
              <PageIcon />
              <I><rect x="3" y="2" width="15" height="14" fill="#7e8fa3" stroke="#555" /><rect x="7" y="7" width="15" height="14" fill="#c8c8c8" stroke="#555" /></I>
              <TrashIcon dither />
              <I><path d="M3 10c2-7 11-8 16-4l2-3v8h-8l3-3c-3-2-7-2-9 2z" fill="#3f76b0" /><path d="M21 14c-2 7-11 8-16 4l-2 3v-8h8l-3 3c3 2 7 2 9-2z" fill="#6f9fcc" /></I>
            </div>
          </div>
        </aside>
      </div>
    </div>
  );
}
